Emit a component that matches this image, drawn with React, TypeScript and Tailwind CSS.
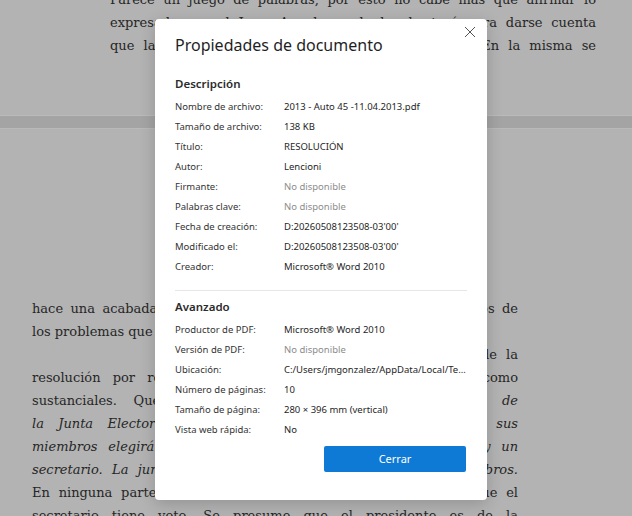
import React from "react";

const Line = ({
  children,
  last = false,
  indent = "",
}: {
  children: React.ReactNode;
  last?: boolean;
  indent?: string;
}) => (
  <div
    className={`h-[23px] leading-[23px] whitespace-nowrap ${indent} ${
      last ? "text-left" : "text-justify [text-align-last:justify]"
    }`}
  >
    {children}
  </div>
);

const Row = ({
  label,
  value,
  muted = false,
}: {
  label: string;
  value: string;
  muted?: boolean;
}) => (
  <div className="flex h-[20px] items-center text-[9.5px]">
    <span className="w-[109px] shrink-0 text-[#333333]">{label}</span>
    <span className={muted ? "text-[#8c8c8c]" : "text-[#262626]"}>{value}</span>
  </div>
);

const descripcion = [
  { label: "Nombre de archivo:", value: "2013 - Auto 45 -11.04.2013.pdf" },
  { label: "Tamaño de archivo:", value: "138 KB" },
  { label: "Título:", value: "RESOLUCIÓN" },
  { label: "Autor:", value: "Lencioni" },
  { label: "Firmante:", value: "No disponible", muted: true },
  { label: "Palabras clave:", value: "No disponible", muted: true },
  { label: "Fecha de creación:", value: "D:20260508123508-03'00'" },
  { label: "Modificado el:", value: "D:20260508123508-03'00'" },
  { label: "Creador:", value: "Microsoft® Word 2010" },
];

const avanzado = [
  { label: "Productor de PDF:", value: "Microsoft® Word 2010" },
  { label: "Versión de PDF:", value: "No disponible", muted: true },
  { label: "Ubicación:", value: "C:/Users/jmgonzalez/AppData/Local/Te..." },
  { label: "Número de páginas:", value: "10" },
  { label: "Tamaño de página:", value: "280 × 396 mm (vertical)" },
  { label: "Vista web rápida:", value: "No" },
];

const PropertiesDialog = () => (
  <div className="absolute left-[155px] top-[19px] w-[332px] h-[481px] bg-white rounded-[4px] shadow-[0_4px_16px_rgba(0,0,0,0.18)] px-[20px] pt-[14px] pb-[28px] flex flex-col font-['Noto_Sans',sans-serif]">
    <button className="absolute top-[7px] right-[11px] w-[12px] h-[12px] text-[#555555]">
      <svg viewBox="0 0 12 12" className="w-[12px] h-[12px]" fill="none" stroke="currentColor" strokeWidth="1">
        <path d="M1 1 L11 11 M11 1 L1 11" />
      </svg>
    </button>

    <h1 className="text-[16px] leading-[24px] text-[#1f1f1f]">Propiedades de documento</h1>

    <h2 className="mt-[17px] h-[20px] leading-[20px] text-[11.5px] font-semibold text-[#2b2b2b]">
      Descripción
    </h2>
    <div className="mt-[3px] flex flex-col">
      {descripcion.map((r) => (
        <Row key={r.label} {...r} />
      ))}
    </div>

    <div className="mt-[13px] h-px bg-[#e6e6e6]" />

    <h2 className="mt-[6px] h-[20px] leading-[20px] text-[11.5px] font-semibold text-[#2b2b2b]">
      Avanzado
    </h2>
    <div className="mt-[3px] flex flex-col">
      {avanzado.map((r) => (
        <Row key={r.label} {...r} />
      ))}
    </div>

    <div className="mt-[6px] flex justify-end">
      <button className="w-[142px] h-[26px] rounded-[2px] bg-[#0f7ad5] text-white text-[11px] mr-[1px]">
        Cerrar
      </button>
    </div>
  </div>
);

export default function App() {
  return (
    <div className="relative w-[632px] h-[516px] overflow-hidden bg-[#a4a4a4] font-['DejaVu_Serif',serif] text-[13px] text-[#262626]">
      <div className="flex flex-col h-full">
        {/* página anterior */}
        <div className="h-[116px] shrink-0 bg-[#b3b3b3] border-b border-[#bbbbbb] overflow-hidden pl-[110px]">
          <div className="w-[486px] -mt-[12px]">
            <Line>Parece un juego de palabras, por esto no cabe más que afirmar lo</Line>
            <Line>expresado por el Juez. Aquel que lo lea bastará para darse cuenta</Line>
            <Line>que la norma es muy clara al respecto del tema. En la misma se</Line>
          </div>
        </div>

        <div className="h-[12px] shrink-0" />

        {/* página siguiente */}
        <div className="flex-1 bg-[#b3b3b3] border-t border-[#b9b9b9] overflow-hidden pl-[32px] pt-[168px]">
          <div className="w-[486px]">
            <Line>hace una acabada mención de los hechos ocurridos, y de muchos de</Line>
            <Line last>los problemas que se plantean en la causa.</Line>
            <Line indent="pl-[130px]">En cuanto a los agravios expuestos acerca de la</Line>
            <Line>resolución por referencia a los requisitos señalados ahora como</Line>
            <Line>
              sustanciales. Que el artículo 12 establece: <i>Los titulares de</i>
            </Line>
            <Line>
              <i>la Junta Electoral estará integrada por cinco afiliados, y sus</i>
            </Line>
            <Line>
              <i>miembros elegirán entre ellos a un presidente, a un vocal y un</i>
            </Line>
            <Line>
              <i>secretario. La junta sesionará con un mínimo de cuatro miembros.</i>
            </Line>
            <Line>En ninguna parte del estatuto se dispone de forma expresa que el</Line>
            <Line>secretario tiene voto. Se presume que el presidente es de la</Line>
          </div>
        </div>
      </div>

      <PropertiesDialog />
    </div>
  );
}
